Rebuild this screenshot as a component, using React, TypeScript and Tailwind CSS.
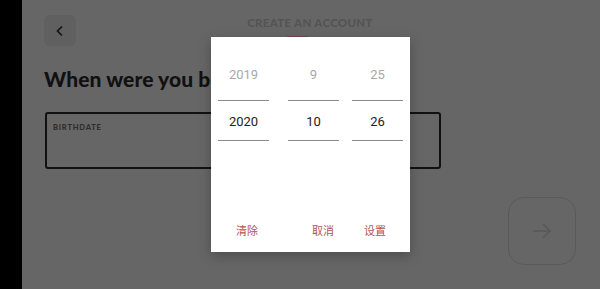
import React from "react";

const cjk = { fontFamily: 'Roboto, "Noto Sans CJK SC", sans-serif' };

function Col({ prev, cur, cls }: { prev: string; cur: string; cls: string }) {
  return (
    <div className={`flex flex-col items-center ${cls}`}>
      <div className="h-[64px] w-full flex items-end justify-center pb-[18px] leading-[14px] text-[13px] text-[#a9a9a9] border-b-[1.5px] border-[#8a8a8a]">
        {prev}
      </div>
      <div className="h-[40px] w-full flex items-center justify-center pt-[3px] text-[13px] text-[#222] border-b-[1.5px] border-[#8a8a8a]">
        {cur}
      </div>
    </div>
  );
}

export default function App() {
  return (
    <div className="flex w-[600px] h-[289px] overflow-hidden" style={{ fontFamily: 'Lato, "Open Sans", sans-serif' }}>
      <div className="w-[22px] bg-black shrink-0" />
      <div className="relative flex-1 bg-[#666666] pl-[22px] pr-[24px] pt-[15px]">
        <div className="grid grid-cols-[1fr_auto_1fr] items-start">
          <div className="w-[32px] h-[31px] rounded-[6px] bg-[#606060] flex items-center justify-center">
            <svg width="10" height="12" viewBox="0 0 10 12">
              <path d="M7 1.5 L2.5 6 L7 10.5" fill="none" stroke="#111" strokeWidth="1.6" />
            </svg>
          </div>
          <div className="flex flex-col items-center pt-[1px]">
            <div className="text-[11.5px] font-black tracking-[0.3px] text-[#545454] leading-[14px]">CREATE AN ACCOUNT</div>
            <div className="mt-[6px] -translate-x-[12px] w-[21px] h-[2px] bg-[#6e4b4b]" />
          </div>
          <div />
        </div>
        <div className="mt-[20px] text-[21px] font-black text-[#111] leading-[26px] tracking-[0.1px]">When were you born?</div>
        <div className="mt-[20px] w-[396px] h-[57px] ml-[1px] border-2 border-[#111] rounded-[3px] px-[6px] pt-[8px]">
          <div className="text-[7.5px] font-black tracking-[0.8px] text-[#2e2e2e]">BIRTHDATE</div>
        </div>
        <div className="flex justify-end mt-[28px]">
          <div className="w-[68px] h-[68px] rounded-[16px] border border-[#5a5a5a] flex items-center justify-center">
            <svg width="20" height="18" viewBox="0 0 20 18">
              <path d="M1 9 H18 M11 2 L18 9 L11 16" fill="none" stroke="#585858" strokeWidth="1.5" />
            </svg>
          </div>
        </div>
        <div
          className="absolute left-[189px] top-[37px] w-[199px] h-[215px] bg-white shadow-[0_4px_12px_rgba(0,0,0,0.25)] flex flex-col"
          style={cjk}
        >
          <div className="flex pl-[7px]">
            <Col prev="2019" cur="2020" cls="w-[51px]" />
            <Col prev="9" cur="10" cls="w-[51px] ml-[19px]" />
            <Col prev="25" cur="26" cls="w-[51px] ml-[13px]" />
          </div>
          <div className="mt-auto mb-[13px] flex text-[11px] text-[#b9514f] leading-[14px]">
            <span className="ml-[25px]">清除</span>
            <span className="ml-[54px]">取消</span>
            <span className="ml-[30px]">设置</span>
          </div>
        </div>
      </div>
    </div>
  );
}
